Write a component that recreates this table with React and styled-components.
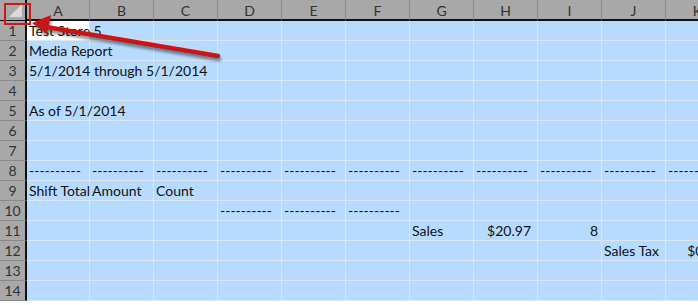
import React from 'react';
import styled, { createGlobalStyle } from 'styled-components';

const GlobalStyle = createGlobalStyle`
    html, body {
        margin: 0;
        padding: 0;
        background: #ffffff;
        overflow: hidden;
    }
`;

const COLS = ['A', 'B', 'C', 'D', 'E', 'F', 'G', 'H', 'I', 'J', 'K'];
const ROW_COUNT = 14;
const DASH = '----------';

// cell contents by row, keyed by column letter
const data = {
    1: { A: { text: 'Test Store 5' } },
    2: { A: { text: 'Media Report' } },
    3: { A: { text: '5/1/2014 through 5/1/2014' } },
    5: { A: { text: 'As of 5/1/2014' } },
    8: COLS.reduce((acc, c) => ({ ...acc, [c]: { text: DASH } }), {}),
    9: {
        A: { text: 'Shift Total' },
        B: { text: 'Amount' },
        C: { text: 'Count' },
    },
    10: { D: { text: DASH }, E: { text: DASH }, F: { text: DASH } },
    11: {
        G: { text: 'Sales' },
        H: { text: '$20.97', align: 'right', money: true },
        I: { text: '8', align: 'right' },
    },
    12: {
        J: { text: 'Sales Tax' },
        K: { text: '$0.84', align: 'right', money: true },
    },
};

const Sheet = styled.div`
    position: relative;
    width: 698px;
    height: 305px;
    overflow: hidden;
    font-family: 'Lato', 'Open Sans', sans-serif;
`;

const Grid = styled.div`
    display: grid;
    grid-template-columns: 27px 63px repeat(10, 64px);
    grid-auto-rows: 20px;
    grid-template-rows: 21px;
`;

const Corner = styled.div`
    position: relative;
    background: #a8a8a8;
    border-right: 2px solid #111;
    border-bottom: 1px solid #111;
    box-sizing: border-box;

    &::after {
        content: '';
        position: absolute;
        right: 3px;
        bottom: 3px;
        width: 0;
        height: 0;
        border-left: 13px solid transparent;
        border-bottom: 13px solid #d9d9d9;
    }
`;

const ColHead = styled.div`
    background: #a8a8a8;
    border-right: 1px solid #8a8a8a;
    border-bottom: 2px solid #111;
    box-sizing: border-box;
    display: flex;
    align-items: center;
    justify-content: center;
    font-size: 14px;
    color: #333;
    padding-top: 1px;
`;

const RowHead = styled.div`
    background: #a8a8a8;
    border-right: 2px solid #111;
    border-bottom: 1px solid #8a8a8a;
    box-sizing: border-box;
    display: flex;
    align-items: center;
    justify-content: center;
    font-size: 14px;
    color: #333;
`;

const Cell = styled.div`
    position: relative;
    background: ${(p) => (p.$active ? '#ffffff' : '#b7dbff')};
    border-right: 1px solid #dde6ee;
    border-bottom: 1px solid #dde6ee;
    box-sizing: border-box;
    display: flex;
    align-items: flex-end;
    justify-content: ${(p) => (p.$align === 'right' ? 'flex-end' : 'flex-start')};
    padding: 0 ${(p) => (p.$money ? '6px' : '3px')} 1px 2px;
    font-size: 14px;
    color: #111;
    white-space: nowrap;
    overflow: visible;
    z-index: ${(p) => (p.$overflow ? 1 : 0)};
`;

const Arrow = styled.svg`
    position: absolute;
    left: 0;
    top: 0;
    pointer-events: none;
    z-index: 5;
`;

const Annotation = () => (
    <Arrow width="698" height="305">
        <defs>
            <filter id="shadow" x="-20%" y="-50%" width="140%" height="200%">
                <feGaussianBlur in="SourceAlpha" stdDeviation="1.5" />
                <feOffset dx="1" dy="3" result="b" />
                <feComponentTransfer>
                    <feFuncA type="linear" slope="0.45" />
                </feComponentTransfer>
                <feMerge>
                    <feMergeNode />
                    <feMergeNode in="SourceGraphic" />
                </feMerge>
            </filter>
        </defs>
        <rect
            x="5"
            y="4"
            width="25"
            height="20"
            fill="none"
            stroke="#d01818"
            strokeWidth="2"
        />
        <g filter="url(#shadow)">
            <line
                x1="218"
                y1="56"
                x2="46"
                y2="27"
                stroke="#c81414"
                strokeWidth="4.5"
                strokeLinecap="round"
            />
            <polygon points="32,23 51,15 47,34" fill="#c81414" />
        </g>
    </Arrow>
);

const App = () => {
    const rows = Array.from({ length: ROW_COUNT }, (_, i) => i + 1);

    return (
        <Sheet>
            <GlobalStyle />
            <Grid>
                <Corner />
                {COLS.map((c) => (
                    <ColHead key={c}>{c}</ColHead>
                ))}
                {rows.map((r) => (
                    <React.Fragment key={r}>
                        <RowHead>{r}</RowHead>
                        {COLS.map((c) => {
                            const cell = (data[r] || {})[c];
                            return (
                                <Cell
                                    key={c}
                                    $active={r === 1 && c === 'A'}
                                    $align={cell && cell.align}
                                    $money={cell && cell.money}
                                    $overflow={!!cell}
                                >
                                    {cell ? cell.text : null}
                                </Cell>
                            );
                        })}
                    </React.Fragment>
                ))}
            </Grid>
            <Annotation />
        </Sheet>
    );
};

export default App;
